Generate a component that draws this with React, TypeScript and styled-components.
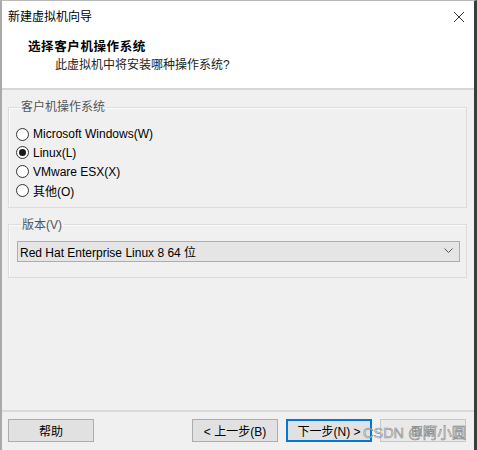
import React from "react";
import styled, { createGlobalStyle } from "styled-components";

const Global = createGlobalStyle`
  html, body { margin: 0; padding: 0; background: #ffffff; }
  body { font-family: "Liberation Sans", "Noto Sans CJK SC", sans-serif; font-size: 12px; color: #000; }
  * { box-sizing: border-box; }
`;

const Window = styled.div`
  position: relative;
  width: 477px;
  height: 450px;
  display: flex;
  flex-direction: column;
  background: #f0f0f0;
  border-top: 1px solid #b9b9b9;
  border-left: 2px solid #a9a9a9;
  border-right: 3px solid #3c3c3c;
  overflow: hidden;
`;

const Header = styled.div`
  background: #ffffff;
  height: 89px;
  display: flex;
  flex-direction: column;
  border-bottom: 2px solid #d6d6d6;
`;

const TitleBar = styled.div`
  height: 31px;
  display: flex;
  align-items: center;
  justify-content: space-between;
  padding: 0 9px 0 6px;
`;

const TitleText = styled.span`
  font-size: 12px;
  line-height: 16px;
  color: #000;
`;

const CloseIcon = styled.svg`
  width: 12px;
  height: 12px;
  display: block;
`;

const Heading = styled.div`
  margin: 7px 0 0 26px;
  font-size: 12.5px;
  font-weight: bold;
  line-height: 16px;
  letter-spacing: 0.6px;
`;

const SubHeading = styled.div`
  margin: 2px 0 0 53px;
  font-size: 12px;
  line-height: 16px;
  color: #222;
`;

const Body = styled.div`
  flex: 1;
  display: flex;
  flex-direction: column;
  gap: 9px;
  padding: 9px 7px 0 6px;
`;

const Group = styled.fieldset<{ $pad: string }>`
  margin: 0;
  padding: ${(p) => p.$pad};
  border: 1px solid #dcdcdc;
  box-shadow: inset 1px 1px 0 #fbfbfb;
  min-width: 0;
`;

const Legend = styled.legend`
  margin-left: 4px;
  padding: 0 2px 0 1px;
  font-size: 12px;
  line-height: 16px;
  color: #555;
`;

const RadioList = styled.div`
  display: flex;
  flex-direction: column;
`;

const RadioRow = styled.label`
  display: flex;
  align-items: center;
  gap: 4px;
  height: 18.67px;
  font-size: 12px;
  color: #000;
`;

const RadioCircle = styled.span<{ $checked: boolean }>`
  width: 13px;
  height: 13px;
  border-radius: 50%;
  border: 1px solid #333;
  background: #fff;
  display: flex;
  align-items: center;
  justify-content: center;
  &::after {
    content: "";
    width: 7px;
    height: 7px;
    border-radius: 50%;
    background: #1a1a1a;
    display: ${(p) => (p.$checked ? "block" : "none")};
  }
`;

const Select = styled.div`
  height: 21px;
  display: flex;
  align-items: center;
  justify-content: space-between;
  padding: 0 6px 0 2px;
  background: #e5e5e5;
  border: 1px solid #adadad;
  font-size: 12px;
  color: #000;
`;

const Chevron = styled.svg`
  width: 9px;
  height: 6px;
  display: block;
`;

const Footer = styled.div`
  height: 40px;
  border-top: 2px solid #dadada;
  display: flex;
  align-items: flex-start;
  padding: 7px 8px 0 6px;
`;

const Spacer = styled.div`
  flex: 1;
`;

const NavGroup = styled.div`
  display: flex;
  gap: 8px;
`;

const Button = styled.div<{ $primary?: boolean; $muted?: boolean }>`
  width: 86px;
  height: 23px;
  display: flex;
  align-items: center;
  justify-content: center;
  background: ${(p) => (p.$muted ? "#e9e9e9" : "#e1e1e1")};
  border: 1px solid ${(p) => (p.$primary ? "#0078d7" : p.$muted ? "#c7c7c7" : "#adadad")};
  box-shadow: ${(p) => (p.$primary ? "inset 0 0 0 1px #0078d7" : "none")};
  font-size: 12px;
  color: ${(p) => (p.$muted ? "#8a8a8a" : "#000")};
`;

const Watermark = styled.div`
  position: absolute;
  left: 361px;
  top: 423px;
  font-family: "Liberation Sans", "Noto Sans CJK SC", sans-serif;
  font-size: 14.5px;
  line-height: 18px;
  color: rgba(235, 235, 235, 0.85);
  -webkit-text-stroke: 0.6px rgba(110, 110, 110, 0.8);
  white-space: nowrap;
  pointer-events: none;
`;

const options = [
  { label: "Microsoft Windows(W)", checked: false },
  { label: "Linux(L)", checked: true },
  { label: "VMware ESX(X)", checked: false },
  { label: "其他(O)", checked: false },
];

export default function App() {
  return (
    <>
      <Global />
      <Window>
        <Header>
          <TitleBar>
            <TitleText>新建虚拟机向导</TitleText>
            <CloseIcon viewBox="0 0 12 12">
              <path d="M1 1 L11 11 M11 1 L1 11" stroke="#333" strokeWidth="1" fill="none" />
            </CloseIcon>
          </TitleBar>
          <Heading>选择客户机操作系统</Heading>
          <SubHeading>此虚拟机中将安装哪种操作系统?</SubHeading>
        </Header>
        <Body>
          <Group $pad="10px 6px 7px 7px">
            <Legend>客户机操作系统</Legend>
            <RadioList>
              {options.map((o) => (
                <RadioRow key={o.label}>
                  <RadioCircle $checked={o.checked} />
                  {o.label}
                </RadioRow>
              ))}
            </RadioList>
          </Group>
          <Group $pad="8px 6px 15px 8px">
            <Legend>版本(V)</Legend>
            <Select>
              <span>Red Hat Enterprise Linux 8 64 位</span>
              <Chevron viewBox="0 0 9 6">
                <path d="M0.5 0.5 L4.5 4.5 L8.5 0.5" stroke="#555" strokeWidth="1" fill="none" />
              </Chevron>
            </Select>
          </Group>
        </Body>
        <Footer>
          <Button>帮助</Button>
          <Spacer />
          <NavGroup>
            <Button>&lt; 上一步(B)</Button>
            <Button $primary>下一步(N) &gt;</Button>
            <Button $muted>取消</Button>
          </NavGroup>
        </Footer>
        <Watermark>CSDN @阿小圆</Watermark>
      </Window>
    </>
  );
}
